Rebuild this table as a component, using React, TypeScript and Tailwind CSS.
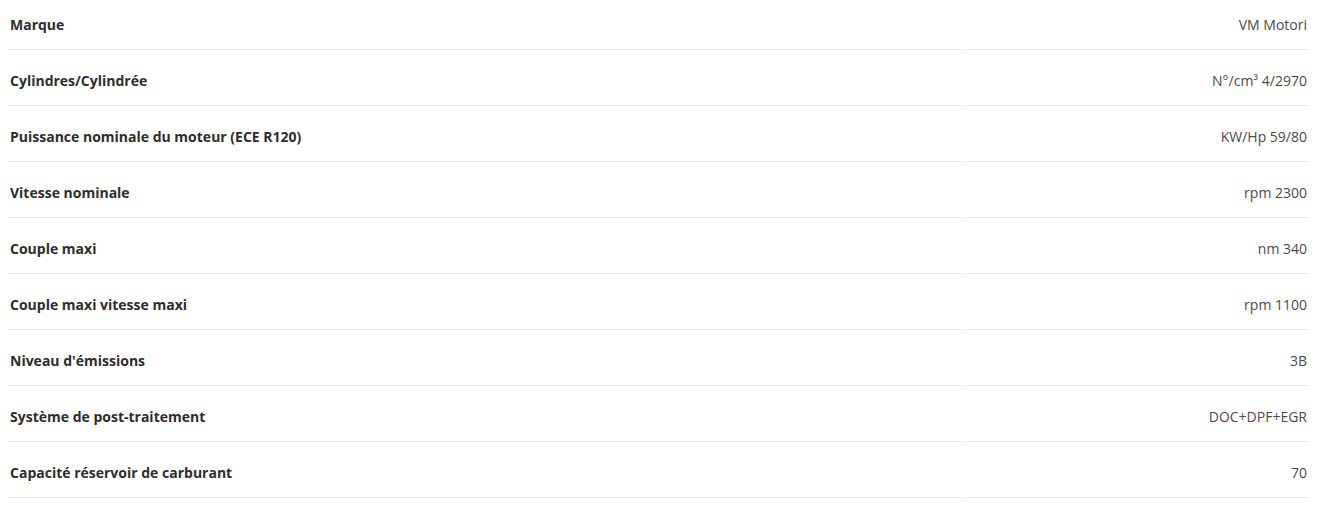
import React from "react";

const rows: [string, string][] = [
  ["Marque", "VM Motori"],
  ["Cylindres/Cylindrée", "N°/cm³ 4/2970"],
  ["Puissance nominale du moteur (ECE R120)", "KW/Hp 59/80"],
  ["Vitesse nominale", "rpm 2300"],
  ["Couple maxi", "nm 340"],
  ["Couple maxi vitesse maxi", "rpm 1100"],
  ["Niveau d'émissions", "3B"],
  ["Système de post-traitement", "DOC+DPF+EGR"],
  ["Capacité réservoir de carburant", "70"],
];

export default function App() {
  return (
    <div
      className="w-[1321px] h-[515px] bg-white px-[8px] overflow-hidden"
      style={{ fontFamily: '"Open Sans", "Noto Sans", sans-serif' }}
    >
      <div className="w-[1301px] flex flex-col">
        {rows.map(([k, v], i) => (
          <div key={i} className="grid grid-cols-[952px_347px] gap-x-[2px]">
            <div
              className={`border-b border-[#ebebeb] pl-[2px] pb-[14px] text-[14px] leading-[20px] font-bold text-[#2d2d2d] ${
                i === 0 ? "pt-[15px]" : "pt-[21px]"
              }`}
            >
              {k}
            </div>
            <div
              className={`border-b border-[#ebebeb] pr-[2px] pb-[14px] text-right text-[14px] leading-[20px] text-[#4a4a4a] ${
                i === 0 ? "pt-[15px]" : "pt-[21px]"
              }`}
            >
              {v}
            </div>
          </div>
        ))}
      </div>
    </div>
  );
}
